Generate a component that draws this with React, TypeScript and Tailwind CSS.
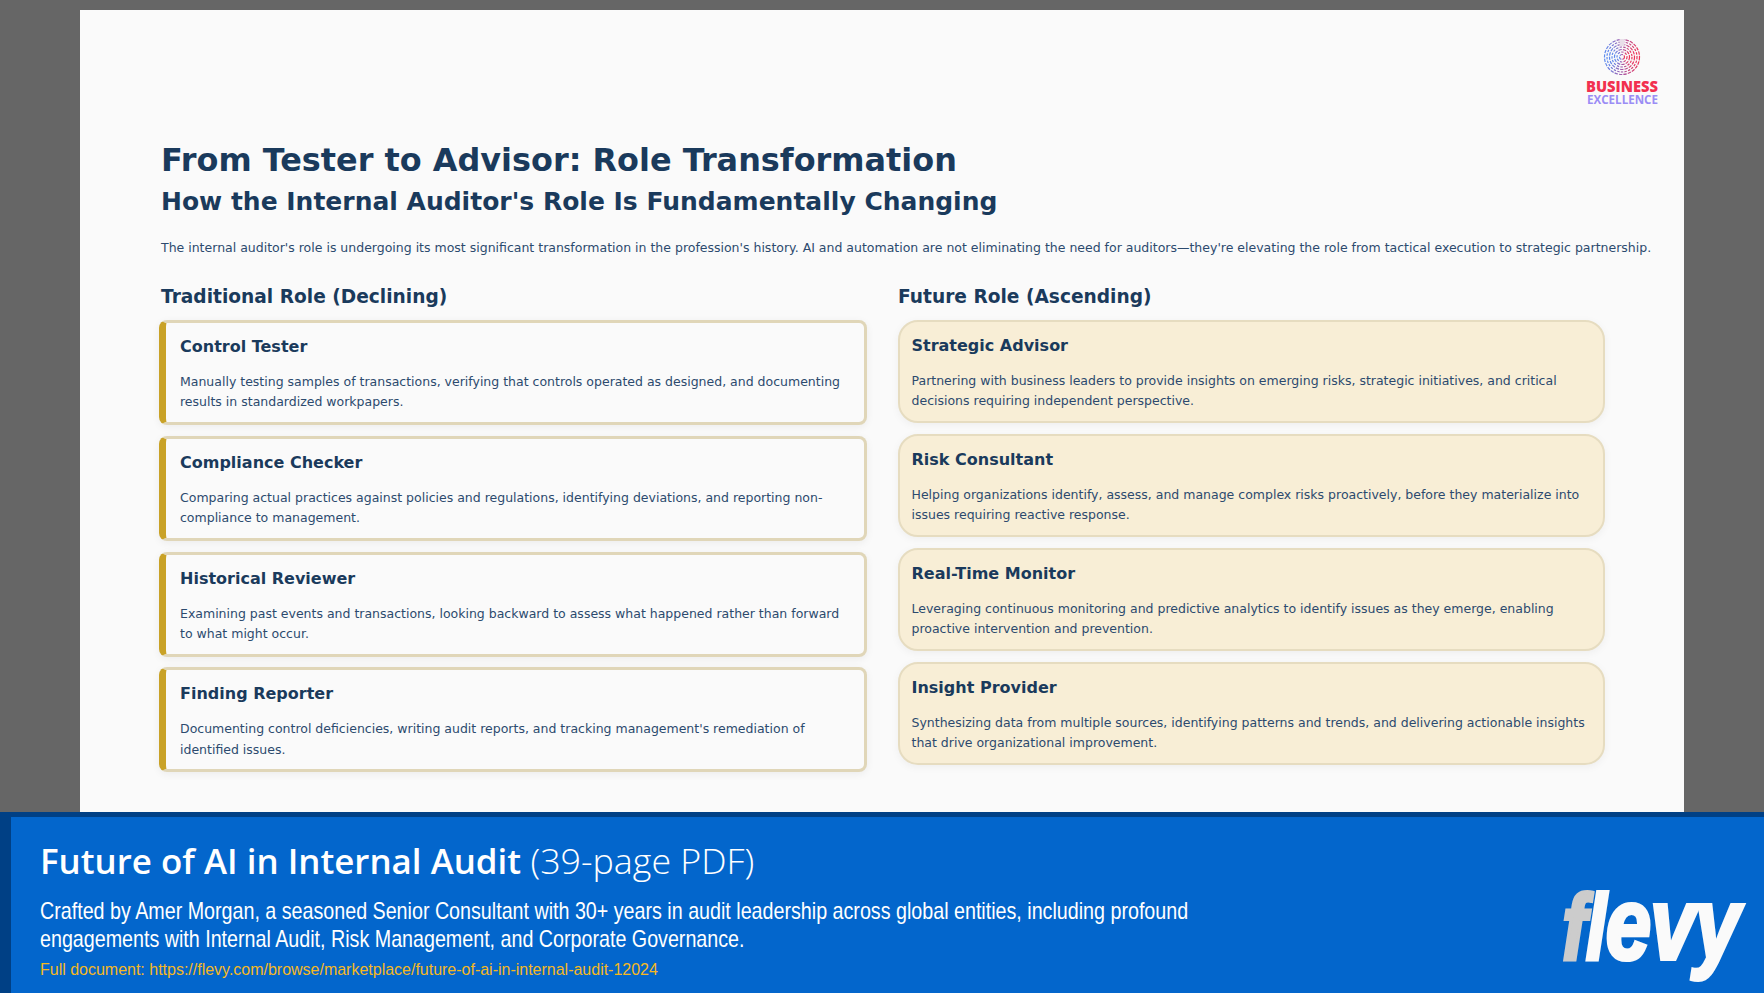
const dv = { fontFamily: '"DejaVu Sans", sans-serif' };

const left = [
  ["Control Tester", "Manually testing samples of transactions, verifying that controls operated as designed, and documenting", "results in standardized workpapers."],
  ["Compliance Checker", "Comparing actual practices against policies and regulations, identifying deviations, and reporting non-", "compliance to management."],
  ["Historical Reviewer", "Examining past events and transactions, looking backward to assess what happened rather than forward", "to what might occur."],
  ["Finding Reporter", "Documenting control deficiencies, writing audit reports, and tracking management's remediation of", "identified issues."],
];
const right = [
  ["Strategic Advisor", "Partnering with business leaders to provide insights on emerging risks, strategic initiatives, and critical", "decisions requiring independent perspective."],
  ["Risk Consultant", "Helping organizations identify, assess, and manage complex risks proactively, before they materialize into", "issues requiring reactive response."],
  ["Real-Time Monitor", "Leveraging continuous monitoring and predictive analytics to identify issues as they emerge, enabling", "proactive intervention and prevention."],
  ["Insight Provider", "Synthesizing data from multiple sources, identifying patterns and trends, and delivering actionable insights", "that drive organizational improvement."],
];

function Body({ a, b }: { a: string; b: string }) {
  return (
    <p className="mt-[14px] whitespace-nowrap text-[12.5px] leading-[20.25px] text-[#2c4a6e]">
      {a}
      <br />
      {b}
    </p>
  );
}

function Logo() {
  const radii = [2.5, 5, 7.5, 10, 12.5, 15, 17.5];
  return (
    <svg width="84" height="74" viewBox="-42 -19 84 74" style={{ fontFamily: '"Open Sans", sans-serif' }}>
      <defs>
        <linearGradient id="lg" x1="0" y1="0" x2="1" y2="0">
          <stop offset="0" stopColor="#5b8bf0" />
          <stop offset="0.5" stopColor="#a55aa8" />
          <stop offset="1" stopColor="#ee3458" />
        </linearGradient>
      </defs>
      {radii.map((r, i) => (
        <circle key={r} r={r} fill="none" stroke="url(#lg)" strokeWidth="1.2" strokeDasharray={i % 2 ? "2.4 1.3" : "3.4 1.1"} />
      ))}
      <rect x="-2.5" y="-18" width="5" height="7" fill="#e9dfe9" />
      <text x="-36" y="35" textLength="72" lengthAdjust="spacingAndGlyphs" fontSize="15.4" fontWeight="800" fill="#f2304f">BUSINESS</text>
      <text x="-35" y="46.5" textLength="71" lengthAdjust="spacingAndGlyphs" fontSize="12.4" fontWeight="700" fill="#9b8df5">EXCELLENCE</text>
    </svg>
  );
}

export default function App() {
  return (
    <div className="flex h-[993px] w-[1764px] flex-col overflow-hidden bg-[#666666] pt-[10px]" style={dv}>
      <div className="mx-[80px] flex min-h-0 flex-1 flex-col bg-[#fafafa] pl-[81px]">
        <div className="flex justify-end pr-[20px] pt-[28px]">
          <Logo />
        </div>
        <h1 className="mt-[28px] whitespace-nowrap text-[31.9px] font-bold leading-[40px] text-[#1a3a5c]">From Tester to Advisor: Role Transformation</h1>
        <h2 className="mt-[4px] whitespace-nowrap text-[25px] font-bold leading-[36px] text-[#1a3a5c]">How the Internal Auditor's Role Is Fundamentally Changing</h2>
        <p className="mt-[18px] whitespace-nowrap text-[12.5px] leading-[20px] text-[#2c4a6e]">The internal auditor's role is undergoing its most significant transformation in the profession's history. AI and automation are not eliminating the need for auditors—they're elevating the role from tactical execution to strategic partnership.</p>
        <div className="mt-[27px] flex">
          <div className="ml-[-2px] w-[708px]">
            <h3 className="ml-[2px] text-[18.6px] font-bold leading-[24px] text-[#1a3a5c]">Traditional Role (Declining)</h3>
            <div className="mt-[11px] flex flex-col gap-[10.8px]">
              {left.map(([t, a, b]) => (
                <div key={t} className="h-[105px] rounded-[8px] border-[3px] border-l-[7px] border-[#e0d6b8] border-l-[#c9a227] bg-[#fafafa] pl-[14px] pt-[13px] shadow-[0_2px_8px_rgba(0,0,0,0.06)]">
                  <h4 className="text-[16px] font-bold leading-[22px] text-[#1a3a5c]">{t}</h4>
                  <Body a={a} b={b} />
                </div>
              ))}
            </div>
          </div>
          <div className="ml-[31px] w-[707px]">
            <h3 className="text-[18.6px] font-bold leading-[24px] text-[#1a3a5c]">Future Role (Ascending)</h3>
            <div className="mt-[11px] flex flex-col gap-[11px]">
              {right.map(([t, a, b]) => (
                <div key={t} className="h-[103px] rounded-[20px] border-2 border-[#e6dcc0] bg-[#f8eed6] pl-[11.5px] pt-[13px] shadow-[0_2px_8px_rgba(0,0,0,0.05)]">
                  <h4 className="text-[16px] font-bold leading-[22px] text-[#1a3a5c]">{t}</h4>
                  <Body a={a} b={b} />
                </div>
              ))}
            </div>
          </div>
        </div>
      </div>
      <div className="relative h-[181px] shrink-0 border-l-[11px] border-t-[5px] border-[#004085] bg-[#0366cc] pl-[29px]">
        <div className="mt-[18px] h-[50px] whitespace-nowrap text-[35.8px] leading-[50px] text-white" style={{ fontFamily: '"Open Sans", sans-serif' }}>
          <span className="text-[34.9px] font-semibold">Future of AI in Internal Audit</span> <span className="font-light">(39-page PDF)</span>
        </div>
        <p className="mt-[12px] origin-left scale-x-[0.82] whitespace-nowrap text-[24px] leading-[28px] text-white" style={{ fontFamily: '"Liberation Sans", sans-serif' }}>
          Crafted by Amer Morgan, a seasoned Senior Consultant with 30+ years in audit leadership across global entities, including profound
          <br />
          engagements with Internal Audit, Risk Management, and Corporate Governance.
        </p>
        <p className="mt-[5px] origin-left scale-x-[0.94] whitespace-nowrap text-[17px] leading-[24px] text-[#f5b81f]" style={{ fontFamily: '"Liberation Sans", sans-serif' }}>
          Full document: https://flevy.com/browse/marketplace/future-of-ai-in-internal-audit-12024
        </p>
        <div className="absolute right-[25px] top-[58px] origin-right scale-x-[0.8] whitespace-nowrap text-[92px] font-bold italic leading-[98px] tracking-[-1px] text-[#fafafa] [-webkit-text-stroke:4px_#fafafa]" style={{ fontFamily: '"Liberation Sans", sans-serif' }}>
          <span className="text-[#cccccc] [-webkit-text-stroke:4px_#cccccc]">f</span>l<span className="text-[102px]">evy</span>
        </div>
      </div>
    </div>
  );
}
